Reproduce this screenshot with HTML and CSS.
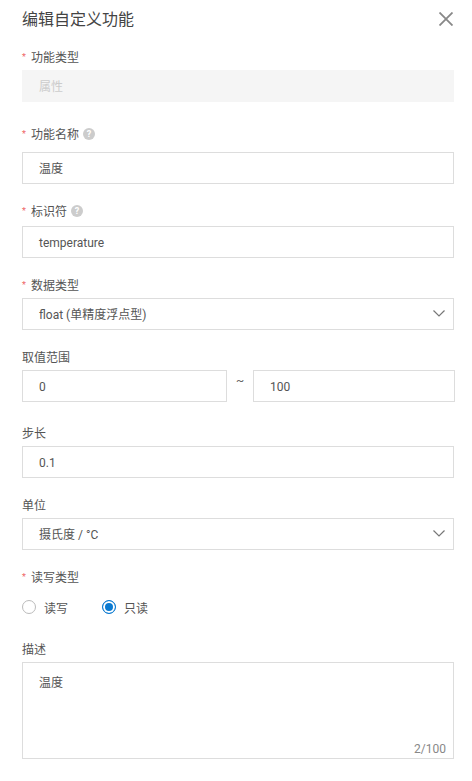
FILE: index.html
```html
<!DOCTYPE html>
<html lang="zh-CN">
  <head>
    <meta charset="UTF-8" />
    <title>编辑自定义功能</title>
    <link rel="stylesheet" href="styles.css">
  </head>
  <body>
    <div class="drawer">
      <div class="drawer-header">
        <span class="drawer-title">编辑自定义功能</span>
        <svg class="close-icon" width="14" height="14" viewBox="0 0 14 14">
          <path d="M0.5 0.5L13.5 13.5M13.5 0.5L0.5 13.5" stroke="#888" stroke-width="1.8" fill="none" />
        </svg>
      </div>

      <div class="field field-first">
        <div class="label"><span class="req">*</span>功能类型</div>
        <div class="box box-disabled">属性</div>
      </div>

      <div class="field">
        <div class="label"><span class="req">*</span>功能名称<span class="help">?</span></div>
        <div class="box box-tip">温度</div>
      </div>

      <div class="field">
        <div class="label"><span class="req">*</span>标识符<span class="help">?</span></div>
        <div class="box box-tip-small">temperature</div>
      </div>

      <div class="field">
        <div class="label"><span class="req">*</span>数据类型</div>
        <div class="box box-select">
          float (单精度浮点型)
          <svg class="arrow" width="12" height="7" viewBox="0 0 12 7">
            <path d="M0.5 0.5L6 6L11.5 0.5" stroke="#777" stroke-width="1.2" fill="none" />
          </svg>
        </div>
      </div>

      <div class="field field-wide">
        <div class="label">取值范围</div>
        <div class="range">
          <div class="box range-from">0</div>
          <span class="tilde">~</span>
          <div class="box range-to">100</div>
        </div>
      </div>

      <div class="field">
        <div class="label">步长</div>
        <div class="box">0.1</div>
      </div>

      <div class="field">
        <div class="label">单位</div>
        <div class="box box-select">
          摄氏度 / °C
          <svg class="arrow" width="12" height="7" viewBox="0 0 12 7">
            <path d="M0.5 0.5L6 6L11.5 0.5" stroke="#777" stroke-width="1.2" fill="none" />
          </svg>
        </div>
      </div>

      <div class="field field-radio">
        <div class="label"><span class="req">*</span>读写类型</div>
        <div class="radios">
          <span class="radio"><i class="dot"></i>读写</span>
          <span class="radio"><i class="dot dot-on"></i>只读</span>
        </div>
      </div>

      <div class="field">
        <div class="label">描述</div>
        <div class="box box-text">
          温度
          <span class="count">2/100</span>
        </div>
      </div>
    </div>
  </body>
</html>
```

FILE: styles.css
```css
html,
body {
  margin: 0;
  height: 781px;
  overflow: hidden;
  background-color: #fff;
}

body {
  color: #555;
  font-family: Roboto, "Noto Sans CJK SC", sans-serif;
  font-size: 12px;
}

.drawer {
  padding: 0 18px 0 22px;
}

.drawer-header {
  display: flex;
  justify-content: space-between;
  align-items: center;
  height: 38px;
}

.drawer-title {
  font-size: 16px;
  color: #444;
  margin-top: -2px;
}

.close-icon {
  margin-right: 1px;
}

.field {
  margin-bottom: 18px;
}

.field-first {
  margin-top: 10px;
  margin-bottom: 23px;
}

.field-wide {
  margin-bottom: 22px;
}

.field-radio {
  margin-bottom: 24px;
}

.label {
  display: flex;
  align-items: center;
  box-sizing: border-box;
  height: 18px;
  padding-bottom: 2px;
  margin-bottom: 4px;
}

.req {
  color: #e66;
  width: 9px;
  font-size: 9px;
  margin-top: 2px;
}

.help {
  width: 12px;
  height: 12px;
  margin-top: 2px;
  margin-left: 4px;
  border-radius: 50%;
  background-color: #ccc;
  color: #fff;
  font-size: 9px;
  font-weight: bold;
  line-height: 12px;
  text-align: center;
}

.box {
  position: relative;
  box-sizing: border-box;
  height: 32px;
  padding: 0 16px;
  border: 1px solid #ddd;
  line-height: 32px;
}

.box-disabled {
  border: none;
  background-color: #f5f5f5;
  color: #ccc;
  line-height: 35px;
  padding-left: 17px;
}

.box-tip {
  margin-top: 9px;
}

.box-tip-small {
  margin-top: 6px;
}

.arrow {
  position: absolute;
  top: 11px;
  right: 8px;
}

.range {
  display: flex;
  align-items: center;
}

.range-from {
  flex: 0 0 205px;
}

.range-to {
  flex: 0 0 202px;
}

.tilde {
  flex: 0 0 26px;
  text-align: center;
  color: #666;
  margin-top: -10px;
}

.radios {
  display: flex;
  margin-top: 12px;
  height: 18px;
  align-items: center;
}

.radio {
  display: flex;
  align-items: center;
  width: 80px;
}

.dot {
  box-sizing: border-box;
  width: 14px;
  height: 14px;
  margin-right: 8px;
  border: 1px solid #bbb;
  border-radius: 50%;
}

.dot-on {
  border-color: #0a7ad1;
  background-color: #0a7ad1;
  box-shadow: inset 0 0 0 2px #fff;
}

.box-text {
  height: 97px;
  padding-top: 4px;
}

.count {
  position: absolute;
  right: 7px;
  bottom: -7px;
  color: #888;
}
```
